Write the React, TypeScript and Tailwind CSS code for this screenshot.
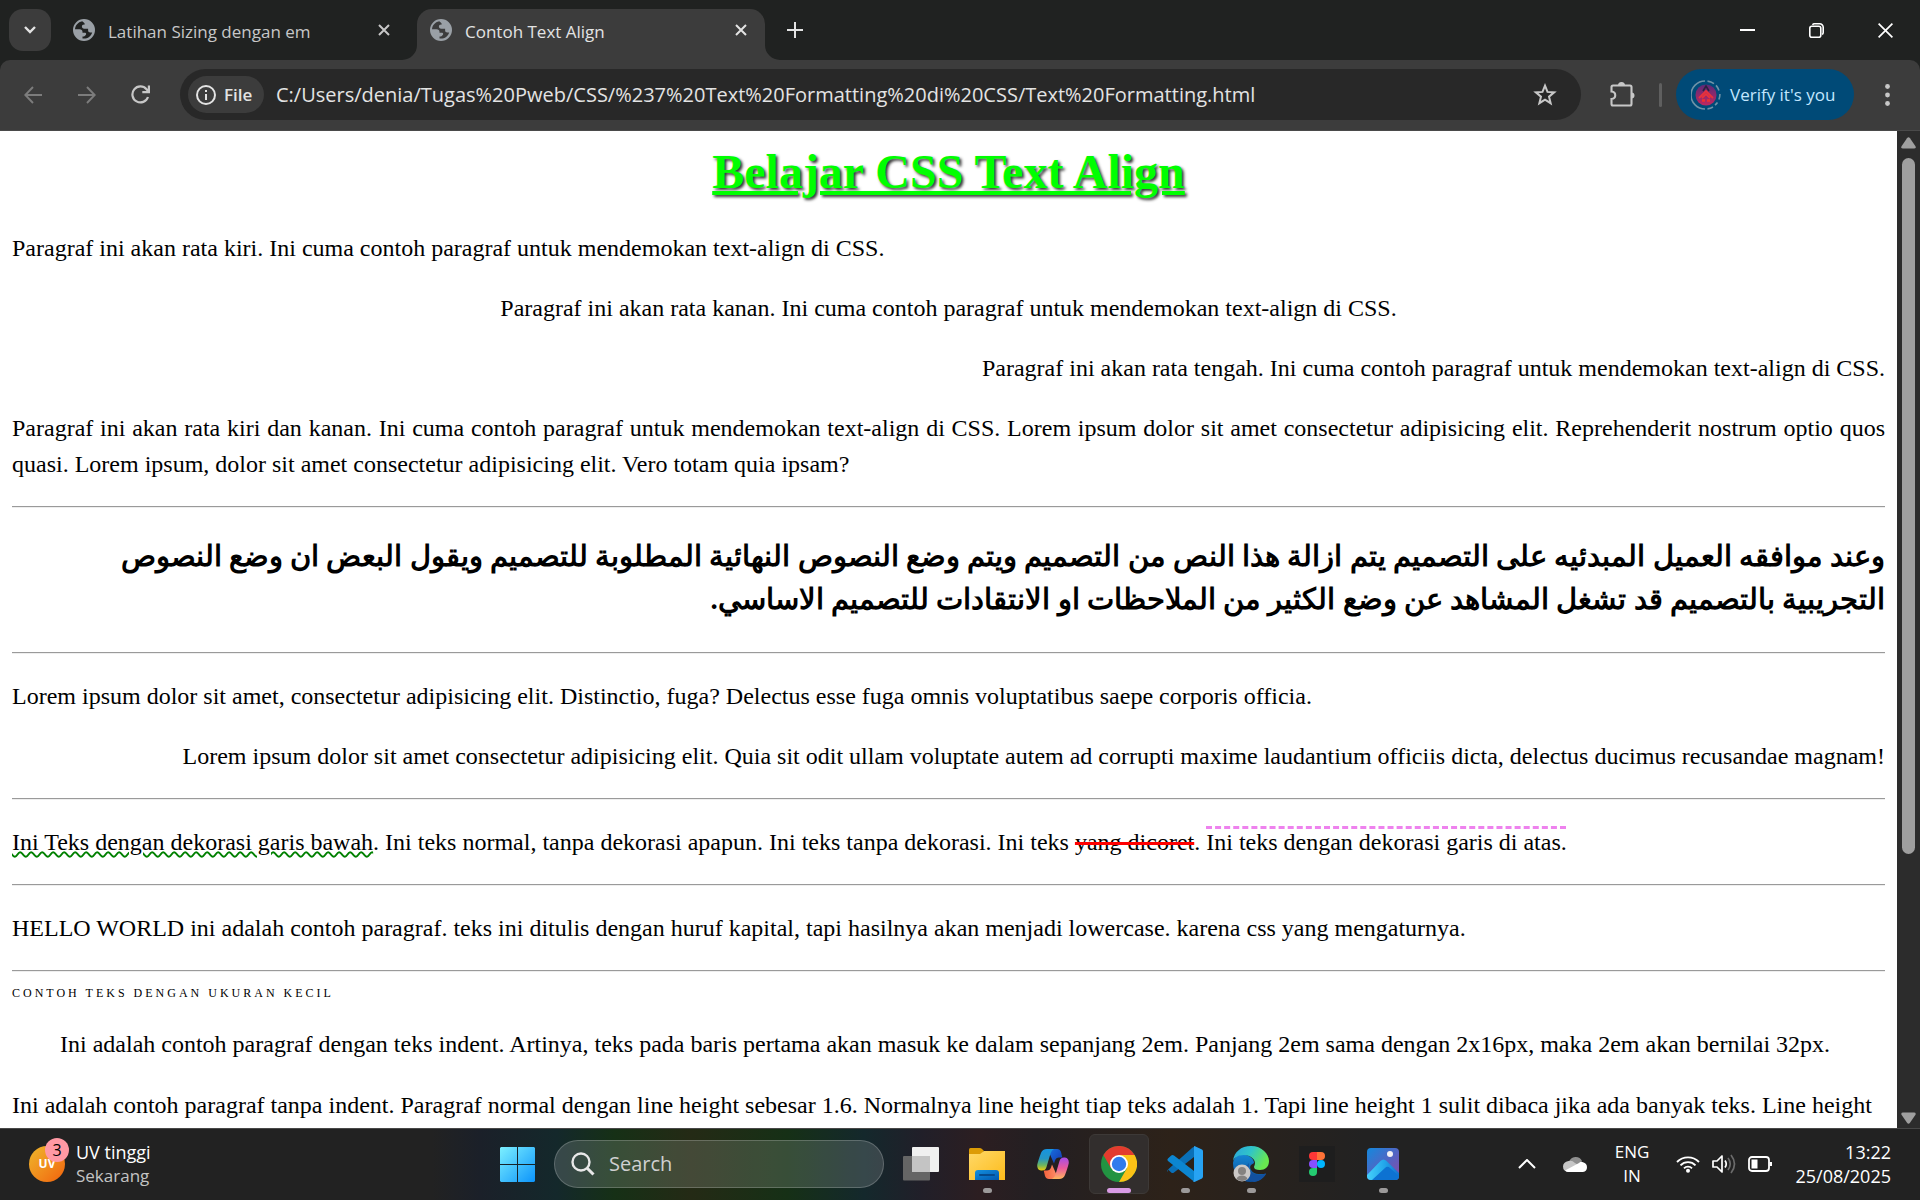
import React from "react";

type P = { className?: string };

const Globe = () => (
  <svg viewBox="0 0 22 22" className="size-[22px] shrink-0" aria-hidden="true">
    <path fillRule="evenodd" d="M11 0a11 11 0 1 1 0 22 11 11 0 0 1 0-22zM9.200 2.200C5 3 2.200 6.600 2 10.200h4.600c1.800 0 2.900 1 2.900 2.600v1h2.600c1.300 0 1.300 1.600.6 2.300l-.9.9c-.8.700-1.600.6-2.300.6v1.900c4.500.700 8.500-1.800 9.700-6h-1.800c-1.500 0-2.300-.8-2.300-2.200V9.800h-3.800c-1.700 0-2.400-1-2.400-2.200 0-1.300.8-2.100 2.200-2.100h.7c0-.9-.6-1.900-2.600-3.300z" fill="#9aa0a6" />
  </svg>
);

const X = ({ className }: P) => (
  <svg viewBox="0 0 12 12" className={className} fill="none" stroke="currentColor" strokeWidth="2" aria-hidden="true">
    <path d="M1 1l10 10M11 1L1 11" />
  </svg>
);

function TabStrip() {
  return (
    <div className="flex h-[60px] items-start bg-[#202221] pt-[9px] pl-[9px] text-[17px] text-[#e3e3e3]">
      <button aria-label="Search tabs" className="flex size-[42px] shrink-0 items-center justify-center rounded-[14px] bg-[#3c3c3c]">
        <svg viewBox="0 0 12 8" className="h-2 w-3" fill="none" stroke="currentColor" strokeWidth="2.400" aria-hidden="true">
          <path d="M1 1l5 5 5-5" />
        </svg>
      </button>
      <div className="flex h-[42px] w-[366px] shrink-0 items-center pr-[27px] pl-[22px] text-[#c7c7c7]">
        <Globe />
        <span className="ml-[13px] grow pt-[3px] whitespace-nowrap">Latihan Sizing dengan em</span>
        <button aria-label="Close Latihan Sizing dengan em"><X className="size-3" /></button>
      </div>
      <div className="relative flex h-[51px] w-[348px] shrink-0 items-center rounded-t-[15px] bg-[#3c3c3c] pr-[18px] pb-[9px] pl-[13px]">
        <svg viewBox="0 0 15 15" className="absolute bottom-0 -left-[15px] size-[15px]" aria-hidden="true"><path d="M15 0v15H0A15 15 0 0 0 15 0z" fill="#3c3c3c" /></svg>
        <svg viewBox="0 0 15 15" className="absolute -right-[15px] bottom-0 size-[15px]" aria-hidden="true"><path d="M0 0v15h15A15 15 0 0 1 0 0z" fill="#3c3c3c" /></svg>
        <Globe />
        <span className="ml-[13px] grow pt-[3px] whitespace-nowrap">Contoh Text Align</span>
        <button aria-label="Close Contoh Text Align"><X className="size-3" /></button>
      </div>
      <button aria-label="New tab" className="ml-[22px] flex h-[42px] items-center">
        <svg viewBox="0 0 16 16" className="size-4" stroke="currentColor" strokeWidth="2" aria-hidden="true"><path d="M8 0v16M0 8h16" /></svg>
      </button>
      <div className="ml-auto flex h-[42px] items-center gap-[54px] pr-[27px] text-white">
        <button aria-label="Minimize">
          <svg viewBox="0 0 15 15" className="size-[15px]" aria-hidden="true"><path d="M0 6h15v2H0z" fill="currentColor" /></svg>
        </button>
        <button aria-label="Restore">
          <svg viewBox="0 0 15 15" className="size-[15px]" fill="none" stroke="currentColor" strokeWidth="1.600" aria-hidden="true">
            <rect x=".8" y="3.200" width="11" height="11" rx="2" />
            <path d="M3.500 1.800C4 1 4.600.8 5.500.8h5.200a3.500 3.500 0 0 1 3.500 3.500v5.200c0 .9-.3 1.500-1 2" />
          </svg>
        </button>
        <button aria-label="Close window">
          <svg viewBox="0 0 15 15" className="size-[15px]" stroke="currentColor" strokeWidth="1.700" aria-hidden="true"><path d="M.6.6l13.800 13.800M14.400.6L.6 14.400" /></svg>
        </button>
      </div>
    </div>
  );
}

function Toolbar() {
  return (
    <div className="bg-[#202221]">
      <div className="flex h-[71px] items-center rounded-t-[10px] border-b border-[#4a4a4a] bg-[#3c3c3c] pr-[30px] pb-[1px] pl-6 text-[#c7c7c7]">
        <button aria-label="Back" className="text-[#7c7c7c]">
          <svg viewBox="0 0 18 18" className="size-[18px]" fill="none" stroke="currentColor" strokeWidth="1.900" aria-hidden="true"><path d="M18 9H1.500M9 1L1.300 9 9 17" /></svg>
        </button>
        <button aria-label="Forward" className="ml-9 text-[#7c7c7c]">
          <svg viewBox="0 0 18 18" className="size-[18px]" fill="none" stroke="currentColor" strokeWidth="1.900" aria-hidden="true"><path d="M0 9h16.500M9 1l7.700 8L9 17" /></svg>
        </button>
        <button aria-label="Reload" className="ml-[35px]">
          <svg viewBox="0 0 19 19" className="size-[19px]" fill="none" stroke="currentColor" strokeWidth="2.200" aria-hidden="true"><path d="M17 12A8 8 0 1 1 15.500 4.200L17.500 6.500M17.900.5v6.600h-6.600" /></svg>
        </button>
        <div className="ml-[30px] flex h-[51px] grow items-center rounded-full bg-[#282828] pr-6 pl-2">
          <button className="flex h-[37px] w-[76px] shrink-0 items-center gap-2 rounded-full bg-[#3c3c3c] pl-2 text-[17px] font-semibold text-[#e3e3e3]">
            <svg viewBox="0 0 20 20" className="size-5" fill="none" stroke="currentColor" strokeWidth="2" aria-hidden="true"><circle cx="10" cy="10" r="9" /><path d="M10 9v6M10 5v2" /></svg>
            File
          </button>
          <input
            aria-label="Address and search bar"
            className="ml-3 min-w-0 grow bg-transparent text-[20px] text-[#e3e3e3] outline-none"
            defaultValue="C:/Users/denia/Tugas%20Pweb/CSS/%237%20Text%20Formatting%20di%20CSS/Text%20Formatting.html"
          />
          <button aria-label="Bookmark this page">
            <svg viewBox="0 0 24 24" className="h-[23px] w-6" fill="none" stroke="currentColor" strokeWidth="2.100" aria-hidden="true"><path d="M12 2.800l2.600 6.500 7 .5-5.400 4.500 1.700 6.800L12 17.400l-5.900 3.700 1.700-6.800-5.400-4.500 7-.5z" /></svg>
          </button>
        </div>
        <button aria-label="Extensions" className="ml-[29px]">
          <svg viewBox="0 0 25 25" className="size-[25px]" fill="none" stroke="currentColor" strokeWidth="2.100" aria-hidden="true">
            <path d="M3.500 3.500H20a1.500 1.500 0 0 1 1.500 1.500v17a1.500 1.500 0 0 1-1.500 1.500H3A1.500 1.500 0 0 1 1.500 22v-5c5-.5 5-7 0-7.500V5a1.500 1.500 0 0 1 1.500-1.500z" />
            <path d="M8 3.500a3.500 3.500 0 0 1 7 0zM21.500 10.500a3 3 0 0 1 0 6z" fill="currentColor" stroke="none" />
          </svg>
        </button>
        <span className="ml-6 h-6 w-[3px] rounded-full bg-[#5f5f5f]" />
        <button className="ml-[14px] flex h-[51px] w-[178px] items-center rounded-full bg-[#004a77] pl-[15px] text-[17px] whitespace-nowrap text-[#c2e7ff]">
          <svg viewBox="0 0 30 30" className="mr-[9px] size-[30px]" fill="none" aria-hidden="true">
            <defs><linearGradient id="avatar" x2="0" y2="1"><stop stopColor="#5b2a78" /><stop offset="1" stopColor="#c02860" /></linearGradient></defs>
            <circle cx="15" cy="15" r="10.500" fill="url(#avatar)" />
            <path d="M8 18l7-7 7 7M11 18l4-4 4 4" stroke="#e8323c" strokeWidth="1.800" />
            <path d="M12 11l3-5 3 5" stroke="#2b2140" strokeWidth="1.600" />
            <path d="M11 20.500h3M16 20.500h3" stroke="#f03030" strokeWidth="2.500" />
            <path d="M14 1a14 14 0 0 0 0 28M16.500 1.100a14 14 0 0 1 6.500 2.500M25 5.400a14 14 0 0 1 3 5M28.900 14a14 14 0 0 1-1 5.500M26.500 22.500a14 14 0 0 1-2.500 2.500M22 27a14 14 0 0 1-5.500 1.900" stroke="#6f93a8" strokeWidth="1.600" />
          </svg>
          Verify it's you
        </button>
        <button aria-label="Chrome menu" className="ml-[31px]">
          <svg viewBox="0 0 5 22" className="h-[22px] w-[5px]" fill="currentColor" aria-hidden="true"><circle cx="2.500" cy="2.500" r="2.400" /><circle cx="2.500" cy="11" r="2.400" /><circle cx="2.500" cy="19.500" r="2.400" /></svg>
        </button>
      </div>
    </div>
  );
}

const Rule = () => <hr className="h-[2px] border-0 border-t border-[#9a9a9a] bg-[#eeeeee]" />;

function Article() {
  return (
    <main className="min-w-0 grow overflow-hidden bg-white px-3 font-['Liberation_Serif',serif] text-[24px] leading-9 text-black">
      <h1 className="pt-[13px] text-center text-[48px] leading-[56px] font-bold text-[#00ff00] underline [text-shadow:2px_2px_3px_#333]">Belajar CSS Text Align</h1>
      <p className="mt-[30px]">Paragraf ini akan rata kiri. Ini cuma contoh paragraf untuk mendemokan text-align di CSS.</p>
      <p className="mt-6 text-center">Paragraf ini akan rata kanan. Ini cuma contoh paragraf untuk mendemokan text-align di CSS.</p>
      <p className="mt-6 text-right">Paragraf ini akan rata tengah. Ini cuma contoh paragraf untuk mendemokan text-align di CSS.</p>
      <p className="my-6 text-justify">
        Paragraf ini akan rata kiri dan kanan. Ini cuma contoh paragraf untuk mendemokan text-align di CSS. Lorem ipsum dolor sit amet consectetur adipisicing elit. Reprehenderit nostrum optio quos quasi. Lorem ipsum, dolor sit amet consectetur adipisicing elit. Vero totam quia ipsam?
      </p>
      <Rule />
      <h2 dir="rtl" lang="ar" className="mt-[27px] mb-[31px] text-start text-[29px] leading-[43px] font-bold">
        وعند موافقه العميل المبدئيه على التصميم يتم ازالة هذا النص من التصميم ويتم وضع النصوص النهائية المطلوبة للتصميم ويقول البعض ان وضع النصوص
        <br />
        التجريبية بالتصميم قد تشغل المشاهد عن وضع الكثير من الملاحظات او الانتقادات للتصميم الاساسي.
      </h2>
      <Rule />
      <p className="mt-6">Lorem ipsum dolor sit amet, consectetur adipisicing elit. Distinctio, fuga? Delectus esse fuga omnis voluptatibus saepe corporis officia.</p>
      <p className="my-6 text-right">Lorem ipsum dolor sit amet consectetur adipisicing elit. Quia sit odit ullam voluptate autem ad corrupti maxime laudantium officiis dicta, delectus ducimus recusandae magnam!</p>
      <Rule />
      <p className="my-6">
        <span className="underline decoration-[#008000] decoration-wavy decoration-2">Ini Teks dengan dekorasi garis bawah</span>. Ini teks normal, tanpa dekorasi apapun. Ini teks tanpa dekorasi. Ini teks{" "}
        <span className="line-through decoration-[#ff0000] decoration-[3px]">yang dicoret</span>.{" "}
        <span className="overline decoration-[#ee82ee] decoration-dashed decoration-[3px]">Ini teks dengan dekorasi garis di atas.</span>
      </p>
      <Rule />
      <p className="my-6">HELLO WORLD ini adalah contoh paragraf. teks ini ditulis dengan huruf kapital, tapi hasilnya akan menjadi lowercase. karena css yang mengaturnya.</p>
      <Rule />
      <div className="mt-3 text-[12px] leading-[18px] tracking-[3px] uppercase">Contoh teks dengan ukuran kecil</div>
      <p className="mt-6 indent-[48px]">Ini adalah contoh paragraf dengan teks indent. Artinya, teks pada baris pertama akan masuk ke dalam sepanjang 2em. Panjang 2em sama dengan 2x16px, maka 2em akan bernilai 32px.</p>
      <p className="mt-6 leading-[38px]">Ini adalah contoh paragraf tanpa indent. Paragraf normal dengan line height sebesar 1.6. Normalnya line height tiap teks adalah 1. Tapi line height 1 sulit dibaca jika ada banyak teks. Line height</p>
    </main>
  );
}

function ScrollBar() {
  return (
    <div className="flex w-[23px] shrink-0 flex-col items-center bg-[#2c2c2c] pt-[6px] pb-1" aria-hidden="true">
      <svg viewBox="0 0 15 12" className="h-3 w-[15px]"><path d="M6 1.200q1.500-1.800 3 0l5.500 8q.8 2.300-1.500 2.300H2q-2.300 0-1.500-2.300z" fill="#9f9f9f" /></svg>
      <div className="mt-[9px] flex w-[13px] grow flex-col">
        <div className="basis-[73%] rounded-full bg-[#9f9f9f]" />
      </div>
      <svg viewBox="0 0 15 12" className="h-3 w-[15px]"><path d="M6 10.800q1.500 1.800 3 0l5.500-8Q15.300.5 13 .5H2Q-.3.5.5 2.800z" fill="#9f9f9f" /></svg>
    </div>
  );
}

const FolderIcon = () => (
  <svg viewBox="0 0 36 36" className="size-9" aria-hidden="true">
    <defs><linearGradient id="fo" x2="1" y2="1"><stop stopColor="#ffd968" /><stop offset="1" stopColor="#fdbb1b" /></linearGradient><linearGradient id="fb" x2="1" y2="1"><stop stopColor="#1490df" /><stop offset="1" stopColor="#0058b0" /></linearGradient></defs>
    <path d="M0 3.500Q0 2 1.500 2h9q1.500 0 2.500 1l2 2-3 4H0z" fill="#dd9c06" />
    <path d="M0 8h11l4-3h21v29H0z" fill="url(#fo)" />
    <path d="M6 34V27q0-3 3-3h18q3 0 3 3v7z" fill="url(#fb)" />
    <path d="M11 29h14" stroke="#064a8c" strokeWidth="2" strokeLinecap="round" />
  </svg>
);

const CopilotIcon = () => (
  <svg viewBox="0 0 36 36" className="size-9" aria-hidden="true">
    <defs>
      <linearGradient id="c1" x2="0" y2="1"><stop stopColor="#1694e0" /><stop offset=".45" stopColor="#2596c4" /><stop offset=".75" stopColor="#6cb560" /><stop offset="1" stopColor="#efcb08" /></linearGradient>
      <linearGradient id="c2" x2="0" y2="1"><stop stopColor="#a64de8" /><stop offset=".5" stopColor="#ea5a9c" /><stop offset="1" stopColor="#ffb65c" /></linearGradient>
      <linearGradient id="c3" x2="1" y2="1"><stop stopColor="#1770df" /><stop offset="1" stopColor="#1536b0" /></linearGradient>
      <linearGradient id="c4" x2="1"><stop stopColor="#f4633c" /><stop offset="1" stopColor="#ff8c68" /></linearGradient>
    </defs>
    <path d="M14 3h8q3 0 4 3l1.300 5.500H24q-3 0-4 3l-1 3-4-9z" fill="url(#c3)" />
    <path d="M22 33h-8q-3 0-4-3l-1.300-5.500H12q3 0 4-3l1-3 4 9z" fill="url(#c4)" />
    <path d="M12 3h7q-2.500 1-3.500 4.500l-4 13.500Q10.600 24.500 7 24.500H6q-4-.5-3.800-5.500Q3 15 6 7q1.500-4 6-4z" fill="url(#c1)" />
    <path d="M24 33h-7q2.500-1 3.500-4.500l4-13.500Q25.400 11.500 29 11.500h1q4 .5 3.800 5.500Q33 21 30 29q-1.500 4-6 4z" fill="url(#c2)" />
  </svg>
);

const ChromeIcon = () => (
  <svg viewBox="0 0 36 36" className="size-9" aria-hidden="true">
    <circle cx="18" cy="18" r="18" fill="#229342" />
    <path d="M2.400 9A18 18 0 0 1 33.600 9L18 9l-7.800 13.500z" fill="#e33b2e" />
    <path d="M33.600 9A18 18 0 0 1 18 36l7.800-13.500L18 9z" fill="#fbc116" />
    <circle cx="18" cy="18" r="9" fill="#fff" /><circle cx="18" cy="18" r="7.200" fill="#2f7bed" />
  </svg>
);

const CodeIcon = () => (
  <svg viewBox="0 0 36 36" className="size-9" aria-hidden="true">
    <path d="M1 23.500l3.200 3Q5.500 27.500 7 26.500L27 11V1q-1 0-2 1L1 23.500q-1.200 1.400 0 2.500z" fill="#0a70b8" />
    <path d="M1 12.500l3.200-3Q5.500 8.500 7 9.500L27 25v10q-1 0-2-1L1 15q-1.200-1.200 0-2.500z" fill="#0c86d1" />
    <path d="M27 0q.6 0 1 .2l7 3.400Q36 4.200 36 5.500v25q0 1.300-1 1.900l-7 3.400q-1 .4-2-.3l1-1.500z" fill="#27a3f3" />
  </svg>
);

const EdgeIcon = () => (
  <svg viewBox="0 0 36 36" className="size-9" aria-hidden="true">
    <defs><linearGradient id="e1" x2="1" y2=".4"><stop stopColor="#2aa4df" /><stop offset=".5" stopColor="#30c4c9" /><stop offset="1" stopColor="#68e850" /></linearGradient><linearGradient id="e2" x2="0" y2="1"><stop stopColor="#1486d4" /><stop offset="1" stopColor="#0d4c94" /></linearGradient></defs>
    <path d="M0 17C1 10 7 8 12 9c5 .6 9 4 9 8l-3 2c-3 3 2 10 9 9l6 0c-3 5-8 8-15 8C8 36 0 29 0 17z" fill="url(#e2)" />
    <path d="M16 17c-2 7 4 12 10 12 3 0 5-1 7-2-2 5-6 8-12 9-7-2-10-9-9-14z" fill="#12509f" />
    <path d="M0 15C1 6 8 0 18 0c11 0 18 8 18 15 0 6-4 9-9 9-4 0-6-1-6-3 0-1 1-2 1-4 0-4-5-8-11-8C5 9 1 12 0 15z" fill="url(#e1)" />
    <circle cx="9" cy="27" r="8.500" fill="#cbc8c6" /><circle cx="9" cy="25" r="4" fill="#858280" /><path d="M3.500 33q1-3.500 5.500-3.500t5.500 3.500a8.500 8.500 0 0 1-11 0z" fill="#858280" />
  </svg>
);

const FigmaIcon = () => (
  <span className="flex size-9 items-center justify-center bg-[#1e1e1e]">
    <svg viewBox="0 0 16 24" className="h-6 w-4" aria-hidden="true">
      <path d="M4 0h4v8H4a4 4 0 0 1 0-8z" fill="#ff3737" /><path d="M8 0h4a4 4 0 0 1 0 8H8z" fill="#ff7237" />
      <path d="M4 8h4v8H4a4 4 0 0 1 0-8z" fill="#874fff" /><circle cx="12" cy="12" r="4" fill="#00b6ff" /><path d="M4 16h4v4a4 4 0 1 1-4-4z" fill="#24cb71" />
    </svg>
  </span>
);

const PhotosIcon = () => (
  <svg viewBox="0 0 32 32" className="size-8" aria-hidden="true">
    <defs><linearGradient id="p1" x2="1" y2="1"><stop stopColor="#1389dd" /><stop offset=".6" stopColor="#5c5fbf" /><stop offset="1" stopColor="#8b4aa5" /></linearGradient><linearGradient id="p2" x2="1"><stop stopColor="#45d0fb" /><stop offset=".55" stopColor="#22a6ea" /><stop offset="1" stopColor="#1371d0" /></linearGradient><clipPath id="pc"><rect width="32" height="32" rx="4" /></clipPath></defs>
    <g clipPath="url(#pc)"><path d="M0 0h32v32H0z" fill="url(#p1)" /><path d="M0 27l13.500-14q3-3 6 0L32 25v7H0z" fill="url(#p2)" /><path d="M5 32l13-12q2.500-2.500 5 0l9 8v4z" fill="#0d72d2" /><circle cx="23" cy="6" r="3" fill="#f3f1f5" /></g>
  </svg>
);

const TaskViewIcon = () => (
  <svg viewBox="0 0 36 36" className="size-9" aria-hidden="true">
    <rect y="10" width="27" height="24.500" rx="1" fill="#656565" /><rect x="9" y="1" width="27" height="25" rx="1" fill="#f0f0f0" /><path d="M9 10h18v16H9z" fill="#c4c4c4" />
  </svg>
);

const StartIcon = () => (
  <svg viewBox="0 0 35 35" className="size-[35px]" aria-hidden="true">
    <defs><linearGradient id="w" gradientUnits="userSpaceOnUse" x1="0" y1="0" x2="35" y2="35"><stop stopColor="#7cf0ff" /><stop offset="1" stopColor="#0c94fb" /></linearGradient></defs>
    <path d="M1 0h16v17H0V1zM18 0h16l1 1v16H18zM0 18h17v17H1l-1-1zM18 18h17v16l-1 1H18z" fill="url(#w)" />
  </svg>
);

function Task({ label, children, running, active }: { label: string; children: React.ReactNode; running?: boolean; active?: boolean }) {
  return (
    <button aria-label={label} className={`relative flex size-[60px] items-center justify-center rounded-md border ${active ? "border-[#3d3937] bg-[#322e2d]" : "border-transparent"}`}>
      {children}
      {running && <span className={`absolute bottom-0 h-[5px] rounded-full ${active ? "w-6 bg-[#d99be4]" : "w-[9px] bg-[#9c9a9a]"}`} />}
    </button>
  );
}

function Taskbar() {
  return (
    <footer className="flex h-[72px] shrink-0 items-center border-t border-[#484848] bg-[linear-gradient(90deg,#222_22.500%,#1b2029_25%,#14282b_29%,#163016_32%,#242a15_36%,#163016_41%,#14282c_45%,#211f29_48%,#2c1e21_51%,#231f22_54%,#2d2219_61%,#222_71%)] pb-px text-[17px] leading-6 text-white">
      <div className="flex grow basis-0 items-center pl-[29px]">
        <button className="flex items-center gap-[11px] text-left">
          <span className="relative flex size-9 items-center justify-center rounded-full bg-linear-to-br from-[#edb72c] to-[#f0600c] text-[12px] font-bold">
            UV
            <span className="absolute -top-2 -right-1 flex size-6 items-center justify-center rounded-full bg-[#ff99a4] text-base font-normal text-black">3</span>
          </span>
          <span className="text-[18px]">
            <span className="block">UV tinggi</span>
            <span className="block text-[17px] text-[#c4c4c4]">Sekarang</span>
          </span>
        </button>
      </div>
      <div className="flex items-center pr-5">
        <Task label="Start"><StartIcon /></Task>
        <label className="mx-[7px] flex h-12 w-[330px] items-center rounded-full border border-white/20 bg-white/15 pl-4">
          <svg viewBox="0 0 24 24" className="size-6 shrink-0" fill="none" stroke="#e8e8e8" strokeWidth="2.400" aria-hidden="true"><circle cx="10" cy="10" r="8.500" /><path d="M16 16l6.500 6.500" strokeWidth="3" /></svg>
          <input aria-label="Search" placeholder="Search" className="ml-[14px] min-w-0 grow bg-transparent text-[20px] outline-none placeholder:text-[#d0d0d0]" />
        </label>
        <div className="flex gap-[6px]">
          <Task label="Task view"><TaskViewIcon /></Task>
          <Task label="File Explorer" running><FolderIcon /></Task>
          <Task label="Copilot"><CopilotIcon /></Task>
          <Task label="Google Chrome" running active><ChromeIcon /></Task>
          <Task label="Visual Studio Code" running><CodeIcon /></Task>
          <Task label="Microsoft Edge" running><EdgeIcon /></Task>
          <Task label="Figma"><FigmaIcon /></Task>
          <Task label="Photos" running><PhotosIcon /></Task>
        </div>
      </div>
      <div className="flex grow basis-0 items-center justify-end pr-[29px]">
        <button aria-label="Show hidden icons"><svg viewBox="0 0 18 10" className="h-[10px] w-[18px]" fill="none" stroke="currentColor" strokeWidth="2" aria-hidden="true"><path d="M1 9l8-8 8 8" /></svg></button>
        <button aria-label="OneDrive" className="ml-[27px]">
          <svg viewBox="0 0 24 16" className="h-4 w-6" aria-hidden="true"><path d="M6 6a7 7 0 0 1 13-1l-6 6z" fill="#8f8f8f" /><path d="M5.500 5Q9 4 12 7l5 3-12 6Q0 15 0 10.500 0 6 5.500 5z" fill="#c6c6c6" /><path d="M2 14.500L16 7q2-2 4-.8 4 1 4 5T20 16H5.500Q3.500 16 2 14.500z" fill="#fff" /></svg>
        </button>
        <button className="ml-7 text-center"><span className="block">ENG</span><span className="block">IN</span></button>
        <button aria-label="Network, volume and battery" className="ml-[27px] flex items-center gap-3">
          <svg viewBox="0 0 24 18" className="h-[18px] w-6" fill="none" stroke="currentColor" strokeWidth="1.900" aria-hidden="true"><path d="M1 7a15.500 15.500 0 0 1 22 0M4.500 10.300a10.500 10.500 0 0 1 15 0M8 13.300a5.600 5.600 0 0 1 8 0" /><circle cx="12" cy="15.700" r="2" fill="currentColor" stroke="none" /></svg>
          <svg viewBox="0 0 24 20" className="h-5 w-6" fill="none" stroke="currentColor" strokeWidth="1.700" aria-hidden="true"><path d="M1 7h4l5-5v16l-5-5H1z" strokeLinejoin="round" /><path d="M13 6.500q2.500 3.500 0 7" /><path d="M16 4q4.500 6 0 12M19 1q7 9 0 18" stroke="#6b6b6b" /></svg>
          <svg viewBox="0 0 24 16" className="h-4 w-6" fill="none" stroke="currentColor" strokeWidth="1.800" aria-hidden="true"><rect x="1" y="1" width="20" height="14" rx="3" /><path d="M3.500 3.500h6v9h-6z" fill="currentColor" stroke="none" /><path d="M22.800 6v4" strokeWidth="2.400" /></svg>
        </button>
        <button className="ml-[23px] text-right text-[18px]"><span className="block">13:22</span><span className="block">25/08/2025</span></button>
      </div>
    </footer>
  );
}

export default function App() {
  return (
    <div className="flex h-screen flex-col overflow-hidden font-['Open_Sans','Noto_Sans',sans-serif]">
      <header className="shrink-0">
        <TabStrip />
        <Toolbar />
      </header>
      <div className="flex min-h-0 grow">
        <Article />
        <ScrollBar />
      </div>
      <Taskbar />
    </div>
  );
}
